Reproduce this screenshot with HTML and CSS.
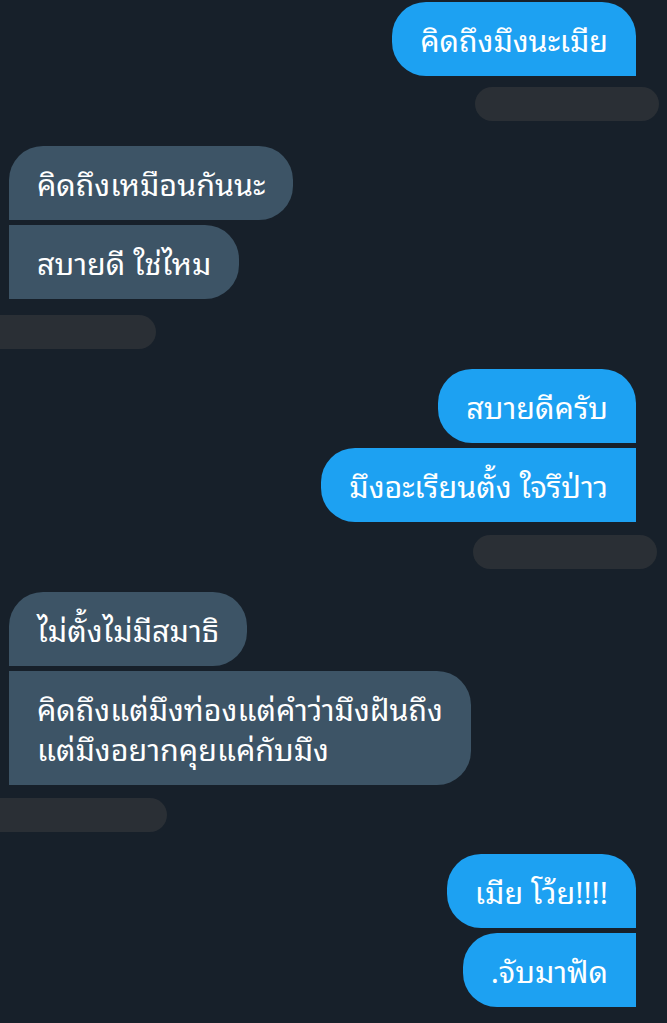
FILE: index.html
```html
<!DOCTYPE html>
<html lang="th">
<head>
    <meta charset="UTF-8">
    <meta name="viewport" content="width=device-width, initial-scale=1.0">
    <title>แชท</title>
    <link rel="stylesheet" href="styles.css">
</head>
<body>
    <div class="chat">
        <div class="group sent first-group">
            <div class="bubble single">คิดถึงมึงนะเมีย</div>
        </div>
        <div class="stamp right s1"></div>

        <div class="group received g-recv">
            <div class="bubble top">คิดถึงเหมือนกันนะ</div>
            <div class="bubble bottom">สบายดี ใช่ไหม</div>
        </div>
        <div class="stamp left s2"></div>

        <div class="group sent g-sent">
            <div class="bubble top">สบายดีครับ</div>
            <div class="bubble bottom">มึงอะเรียนตั้ง ใจรึป่าว</div>
        </div>
        <div class="stamp right s3"></div>

        <div class="group received g-recv2">
            <div class="bubble top">ไม่ตั้งไม่มีสมาธิ</div>
            <div class="bubble bottom">คิดถึงแต่มึงท่องแต่คำว่ามึงฝันถึง<br>แต่มึงอยากคุยแค่กับมึง</div>
        </div>
        <div class="stamp left s4"></div>

        <div class="group sent g-sent2">
            <div class="bubble top">เมีย โว้ย!!!!</div>
            <div class="bubble bottom">.จับมาฟัด</div>
        </div>
    </div>
</body>
</html>
```
FILE: styles.css
```css
body {
    margin: 0;
    background-color: #17202a;
    font-family: "Noto Sans Thai Looped", "Noto Sans", sans-serif;
    color: #ffffff;
}
.chat {
    display: flex;
    flex-direction: column;
    padding-top: 2px;
}
.group {
    display: flex;
    flex-direction: column;
    gap: 5px;
}
.sent {
    align-items: flex-end;
    padding-right: 31px;
}
.received {
    align-items: flex-start;
    padding-left: 9px;
}
.bubble {
    font-size: 30.5px;
    line-height: 40px;
    padding: 17px 28px;
    border-radius: 34px;
}
.sent .bubble {
    background-color: #1da1f2;
}
.received .bubble {
    background-color: #3d5466;
}
.sent .single,
.sent .top {
    border-bottom-right-radius: 0;
}
.sent .bottom {
    border-top-right-radius: 0;
    border-bottom-right-radius: 0;
}
.received .top {
    border-bottom-left-radius: 0;
}
.received .bottom {
    border-top-left-radius: 0;
    border-bottom-left-radius: 0;
}
.stamp {
    height: 34px;
    background-color: #2a2f35;
}
.stamp.right {
    align-self: flex-end;
    width: 184px;
    border-radius: 17px;
}
.stamp.left {
    align-self: flex-start;
    border-radius: 0 17px 17px 0;
}
.s1 { margin: 11px 8px 0 0; }
.g-recv { margin-top: 25px; }
.s2 { margin-top: 16px; width: 156px; }
.g-sent { margin-top: 20px; }
.s3 { margin: 13px 10px 0 0; }
.g-recv2 { margin-top: 23px; }
.s4 { margin-top: 13px; width: 167px; }
.g-sent2 { margin-top: 22px; }
```
